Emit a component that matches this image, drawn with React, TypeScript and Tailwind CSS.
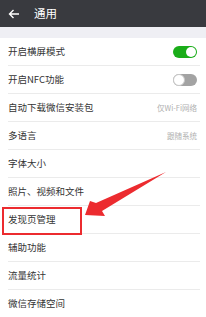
import React from 'react'

type Row = {
  label: string
  value?: string
  toggle?: 'on' | 'off'
}

const rows: Row[] = [
  { label: '开启横屏模式', toggle: 'on' },
  { label: '开启NFC功能', toggle: 'off' },
  { label: '自动下载微信安装包', value: '仅Wi-Fi网络' },
  { label: '多语言', value: '跟随系统' },
  { label: '字体大小' },
  { label: '照片、视频和文件' },
  { label: '发现页管理' },
  { label: '辅助功能' },
  { label: '流量统计' },
  { label: '微信存储空间' },
]

function Toggle({ on }: { on: boolean }) {
  if (on) {
    return (
      <div className="flex h-[12px] w-[24px] items-center justify-end rounded-full bg-[#1aad19] px-[1px]">
        <div className="h-[10px] w-[10px] rounded-full bg-white" />
      </div>
    )
  }
  return (
    <div className="flex h-[12px] w-[24px] items-center justify-start rounded-full bg-[#a3a3a3]">
      <div className="h-[12px] w-[12px] rounded-full border border-[#c8c8c8] bg-white" />
    </div>
  )
}

export default function App() {
  return (
    <div
      className="relative h-[317px] w-[206px] overflow-hidden bg-[#efeff4]"
      style={{ fontFamily: '"Noto Sans CJK SC", "Noto Sans", sans-serif' }}
    >
      {/* header */}
      <div className="flex h-[27px] items-center bg-[#393a3f] text-white">
        <svg width="12" height="10" viewBox="0 0 12 10" className="ml-[8px]" fill="none">
          <path d="M11 5H1.5M5.5 1L1.5 5l4 4" stroke="#fff" strokeWidth="1.4" />
        </svg>
        <span className="ml-[14px] text-[11.5px] leading-none">通用</span>
      </div>

      {/* list */}
      <div className="mt-[11px] flex flex-col bg-white">
        {rows.map((r, i) => (
          <div key={r.label} className="flex h-[28px] flex-col">
            <div className="flex flex-1 items-center justify-between pl-[8px] pr-[9px]">
              <span className="text-[9.5px] leading-none text-[#333]">{r.label}</span>
              {r.toggle && <Toggle on={r.toggle === 'on'} />}
              {r.value && <span className="text-[7.5px] leading-none text-[#b0b0b0]">{r.value}</span>}
            </div>
            {i < rows.length - 1 && <div className="ml-[8px] mr-[6px] h-px bg-[#ebebeb]" />}
          </div>
        ))}
      </div>

      {/* highlight box */}
      <div className="absolute left-[2px] top-[207px] h-[28px] w-[80px] border-2 border-[#ec2b2f]" />

      {/* arrow */}
      <svg className="absolute left-0 top-0" width="206" height="317" viewBox="0 0 206 317">
        <polygon points="85,215 90,201 96,203 166,172 102,211 105,216" fill="#ec2b2f" />
      </svg>
    </div>
  )
}
